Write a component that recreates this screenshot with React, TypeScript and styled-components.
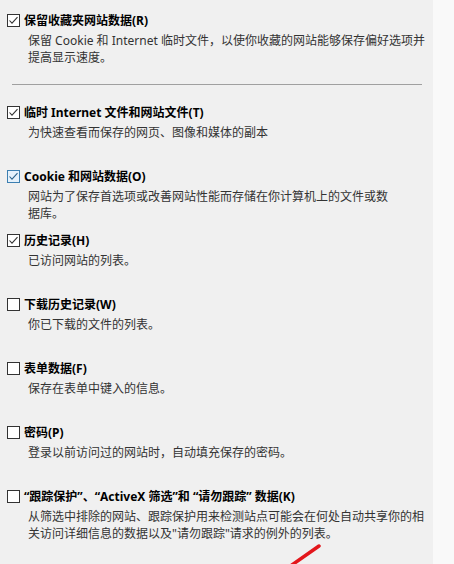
import React from "react";
import styled, { createGlobalStyle } from "styled-components";

const GlobalStyle = createGlobalStyle`
  html, body {
    margin: 0;
    padding: 0;
    background: #f9f9f9;
  }
  body {
    font-family: "Noto Sans", "Noto Sans CJK SC", sans-serif;
    -webkit-font-smoothing: antialiased;
  }
`;

interface OptionItem {
  title: string;
  lines: string[];
  checked: boolean;
  focused?: boolean;
}

const Panel = styled.div`
  position: relative;
  width: 433px;
  height: 564px;
  background: #f0f0f0;
  padding-top: 10px;
  box-sizing: border-box;
  overflow: hidden;
`;

const Option = styled.div`
  height: 64px;
  padding-left: 7px;
  box-sizing: border-box;
`;

const TitleRow = styled.label`
  display: flex;
  align-items: center;
  height: 20px;
  gap: 4px;
  font-size: 12px;
  font-weight: 700;
  color: #000;
  white-space: nowrap;
`;

const Box = styled.span<{ $focused?: boolean }>`
  display: flex;
  align-items: center;
  justify-content: center;
  width: 13px;
  height: 13px;
  box-sizing: border-box;
  border: 1px solid ${(p) => (p.$focused ? "#3c7fb1" : "#333333")};
  background: ${(p) => (p.$focused ? "#e5f1fb" : "#ffffff")};
  flex-shrink: 0;
`;

const Desc = styled.div`
  padding: 2px 0 0 21px;
  font-size: 12px;
  line-height: 17px;
  color: #333333;
  white-space: nowrap;
`;

const Separator = styled.hr`
  margin: 10px 0 17px 12px;
  width: 410px;
  height: 0;
  border: none;
  border-top: 1px solid #a0a0a0;
`;

const Arrow = styled.svg`
  position: absolute;
  left: 280px;
  top: 536px;
`;

const first: OptionItem = {
  title: "保留收藏夹网站数据(R)",
  lines: [
    "保留 Cookie 和 Internet 临时文件，以使你收藏的网站能够保存偏好选项并",
    "提高显示速度。",
  ],
  checked: true,
};

const options: OptionItem[] = [
  {
    title: "临时 Internet 文件和网站文件(T)",
    lines: ["为快速查看而保存的网页、图像和媒体的副本"],
    checked: true,
  },
  {
    title: "Cookie 和网站数据(O)",
    lines: [
      "网站为了保存首选项或改善网站性能而存储在你计算机上的文件或数",
      "据库。",
    ],
    checked: true,
    focused: true,
  },
  {
    title: "历史记录(H)",
    lines: ["已访问网站的列表。"],
    checked: true,
  },
  {
    title: "下载历史记录(W)",
    lines: ["你已下载的文件的列表。"],
    checked: false,
  },
  {
    title: "表单数据(F)",
    lines: ["保存在表单中键入的信息。"],
    checked: false,
  },
  {
    title: "密码(P)",
    lines: ["登录以前访问过的网站时，自动填充保存的密码。"],
    checked: false,
  },
  {
    title: "“跟踪保护”、“ActiveX 筛选”和 “请勿跟踪” 数据(K)",
    lines: [
      "从筛选中排除的网站、跟踪保护用来检测站点可能会在何处自动共享你的相",
      "关访问详细信息的数据以及\"请勿跟踪\"请求的例外的列表。",
    ],
    checked: false,
  },
];

function CheckBox({ checked, focused }: { checked: boolean; focused?: boolean }) {
  return (
    <Box $focused={focused}>
      {checked && (
        <svg width="11" height="11" viewBox="0 0 11 11">
          <polyline
            points="1.5,5.5 4,8.2 9.5,2.2"
            fill="none"
            stroke={focused ? "#2c628b" : "#333333"}
            strokeWidth="1.1"
          />
        </svg>
      )}
    </Box>
  );
}

function OptionRow({ item }: { item: OptionItem }) {
  return (
    <Option>
      <TitleRow>
        <CheckBox checked={item.checked} focused={item.focused} />
        {item.title}
      </TitleRow>
      <Desc>
        {item.lines.map((line) => (
          <div key={line}>{line}</div>
        ))}
      </Desc>
    </Option>
  );
}

export default function App() {
  return (
    <>
      <GlobalStyle />
      <Panel>
        <OptionRow item={first} />
        <Separator />
        {options.map((item) => (
          <OptionRow key={item.title} item={item} />
        ))}
        <Arrow width="50" height="30" viewBox="0 0 50 30">
          <line x1="9" y1="31" x2="39" y2="10" stroke="#e3161b" strokeWidth="3.5" strokeLinecap="round" />
        </Arrow>
      </Panel>
    </>
  );
}
